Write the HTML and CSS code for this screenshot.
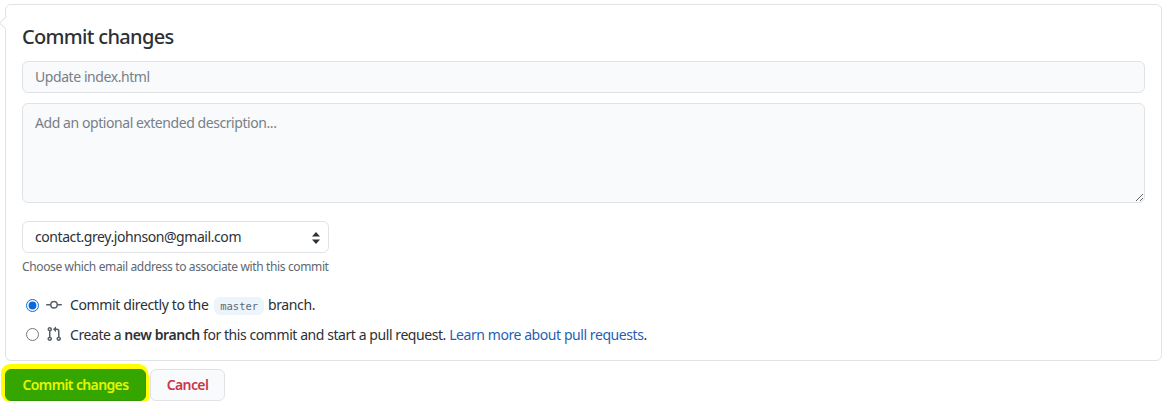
FILE: index.html
```html
<!DOCTYPE html>
<html lang="en">
<head>
<meta charset="utf-8">
<title>Commit changes</title>
<link rel="stylesheet" href="styles.css">
</head>
<body>
<form class="page">
  <section class="box">
    <h2 class="title">Commit changes</h2>
    <input class="field" type="text" placeholder="Update index.html">
    <textarea class="field area" placeholder="Add an optional extended description..."></textarea>
    <div class="select">
      <span>contact.grey.johnson@gmail.com</span>
      <svg class="updown" viewBox="0 0 8 12" width="8" height="12"><path d="M4 0 8 4.6H0ZM4 12 0 7.4H8Z"/></svg>
    </div>
    <p class="note">Choose which email address to associate with this commit</p>
    <label class="choice first">
      <input type="radio" name="target" checked>
      <svg class="icon" viewBox="0 0 16 16" width="16" height="16"><path d="M11.93 8.5a4.002 4.002 0 0 1-7.86 0H.75a.75.75 0 0 1 0-1.5h3.32a4.002 4.002 0 0 1 7.86 0h3.32a.75.75 0 0 1 0 1.5Zm-1.43-.75a2.5 2.5 0 1 0-5 0 2.5 2.5 0 0 0 5 0Z"/></svg>
      <span class="direct">Commit directly to the <code class="branch">master</code> branch.</span>
    </label>
    <label class="choice">
      <input type="radio" name="target">
      <svg class="icon" viewBox="0 0 16 16" width="16" height="16"><path d="M1.5 3.25a2.25 2.25 0 1 1 3 2.122v5.256a2.251 2.251 0 1 1-1.5 0V5.372A2.25 2.25 0 0 1 1.5 3.25Zm5.677-.177L9.573.677A.25.25 0 0 1 10 .854V2.5h1A2.5 2.5 0 0 1 13.5 5v5.628a2.251 2.251 0 1 1-1.5 0V5a1 1 0 0 0-1-1h-1v1.646a.25.25 0 0 1-.427.177L7.177 3.427a.25.25 0 0 1 0-.354ZM3.75 2.5a.75.75 0 1 0 0 1.5.75.75 0 0 0 0-1.5Zm0 9.5a.75.75 0 1 0 0 1.5.75.75 0 0 0 0-1.5Zm8.25.75a.75.75 0 1 0 1.5 0 .75.75 0 0 0-1.5 0Z"/></svg>
      <span>Create a <strong>new branch</strong> for this commit and start a pull request. <a class="link" href="#">Learn more about pull requests</a>.</span>
    </label>
  </section>
  <div class="actions">
    <button class="btn primary" type="button">Commit changes</button>
    <button class="btn cancel" type="button">Cancel</button>
  </div>
</form>
</body>
</html>
```

FILE: styles.css
```css
* { box-sizing: border-box; }
html, body { margin: 0; background: #fff; }
body {
  font-family: "Noto Sans", "Open Sans", sans-serif;
  font-size: 14px;
  color: #2c3137;
  overflow: hidden;
}
.page { padding: 4px 8px 0 5px; }
.box {
  position: relative;
  height: 357px;
  border: 1px solid #dfe3e8;
  border-radius: 6px;
  padding: 16px;
  display: flex;
  flex-direction: column;
  align-items: flex-start;
}
.box::before {
  content: "";
  position: absolute;
  left: -5px;
  top: 13px;
  width: 9px;
  height: 9px;
  background: #fff;
  border-left: 1px solid #dfe3e8;
  border-bottom: 1px solid #dfe3e8;
  transform: rotate(45deg);
}
.title {
  margin: 0 0 8px;
  height: 32px;
  line-height: 32px;
  font-size: 20px;
  font-weight: 500;
  letter-spacing: -0.68px;
}
.field {
  display: block;
  width: 100%;
  height: 32px;
  padding: 4px 12px 6px;
  border: 1px solid #dfe3e8;
  border-radius: 6px;
  background: #f9fafc;
  font: inherit;
  font-size: 14px;
  letter-spacing: -0.43px;
  line-height: 20px;
  color: #2c3137;
  outline: none;
}
.field::placeholder { color: #777f88; opacity: 1; }
.area {
  height: 100px;
  margin-top: 10px;
  padding-top: 9px;
  resize: vertical;
}
.select {
  position: relative;
  width: 307px;
  height: 32px;
  margin-top: 18px;
  padding: 0 12px 1px;
  display: flex;
  align-items: center;
  border: 1px solid #dfe3e8;
  border-radius: 6px;
  letter-spacing: -0.43px;
}
.updown {
  position: absolute;
  right: 8px;
  top: 10px;
  fill: #2c3137;
}
.note {
  margin: 6px 0 0;
  height: 16px;
  line-height: 16px;
  font-size: 12px;
  color: #606871;
  letter-spacing: -0.365px;
}
.choice {
  display: flex;
  align-items: center;
  height: 20px;
  padding-left: 4px;
  letter-spacing: -0.43px;
}
.direct { letter-spacing: -0.36px; }
.first { margin-top: 20px; }
.choice + .choice { margin-top: 9px; }
.choice input {
  width: 13px;
  height: 13px;
  margin: 0 7px 0 0;
  accent-color: #0969da;
}
.icon { fill: #57606a; margin-right: 8px; flex: none; }
.branch {
  display: inline-block;
  height: 18px;
  line-height: 18px;
  padding: 0 6px 0 6.5px;
  margin: 0 0.5px 0 2px;
  background: #edf5fc;
  border-radius: 6px;
  font-family: "DejaVu Sans Mono", "Liberation Mono", monospace;
  font-size: 10.5px;
  letter-spacing: 0;
  color: #606871;
}
strong { font-weight: 600; }
.link { color: #1f5fb4; text-decoration: none; }
.actions {
  display: flex;
  gap: 4px;
  margin-top: 8px;
}
.btn {
  height: 32px;
  border-radius: 6px;
  font: inherit;
  font-weight: 600;
  padding: 0 0 2px;
}
.primary {
  width: 141px;
  background: #35a500;
  border: 1px solid #2f9a00;
  color: #e6f500;
  letter-spacing: -0.63px;
  box-shadow: -1px -2px 0 3px #ffff00, 1px 2px 0 2px #ffff00;
}
.cancel {
  width: 75px;
  background: #f9fafc;
  border: 1px solid #dfe3e8;
  color: #c8374a;
  letter-spacing: -0.6px;
}
```
